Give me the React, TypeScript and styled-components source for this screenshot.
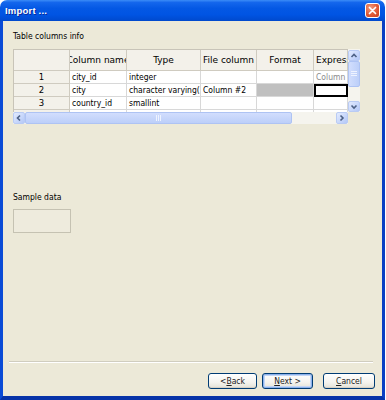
import React from 'react';
import styled, { createGlobalStyle } from 'styled-components';

const FONT = `"DejaVu Sans Condensed", "DejaVu Sans", "Liberation Sans", sans-serif`;

const Global = createGlobalStyle`
  html, body { margin: 0; padding: 0; background: #ffffff; }
  body { font-family: ${FONT}; font-size: 8.5px; color: #000; }
`;

const Window = styled.div`
  width: 385px;
  height: 400px;
  display: flex;
  flex-direction: column;
`;

const TitleBar = styled.div`
  height: 21px;
  flex: none;
  display: flex;
  align-items: center;
  justify-content: space-between;
  padding: 0 5px;
  border-radius: 7px 7px 0 0;
  background: linear-gradient(
    to bottom,
    #3b8cf7 0%,
    #1466ec 12%,
    #0458e4 40%,
    #0054e3 70%,
    #0049cd 100%
  );
`;

const TitleText = styled.span`
  color: #ffffff;
  font: bold 9.5px "Liberation Sans", Arial, sans-serif;
  letter-spacing: 0.2px;
  text-shadow: 1px 1px 0 #0b2a9a;
`;

const CloseBtn = styled.div`
  width: 13px;
  height: 13px;
  border: 1px solid #ffffff;
  border-radius: 3px;
  background: radial-gradient(circle at 35% 30%, #f39a7c 0%, #e05a36 55%, #c83e1e 100%);
  display: flex;
  align-items: center;
  justify-content: center;
`;

const Client = styled.div`
  flex: 1;
  display: flex;
  flex-direction: column;
  background: #ece9d8;
  border-style: solid;
  border-color: #0a4bd6 #0a3fc4 #0633a8 #0a4bd6;
  border-width: 0 3px 4px 3px;
  padding: 10px 7px 7px 10px;
`;

const Label = styled.div<{ $top?: number }>`
  height: 11px;
  line-height: 11px;
  margin-top: ${(p) => p.$top ?? 0}px;
  white-space: nowrap;
`;

const GridFrame = styled.div`
  margin-top: 7px;
  width: 347px;
  display: grid;
  grid-template-columns: 335px 12px;
  grid-template-rows: 63px 12px;
`;

const Viewport = styled.div`
  overflow: hidden;
  background: #ffffff;
  border-left: 1px solid #c8c4b8;
  border-top: 1px solid #c8c4b8;
  box-sizing: border-box;
`;

const Table = styled.div`
  display: grid;
  grid-template-columns: 56px 57px 74px 56px 57px 34px;
  grid-auto-rows: 13px;
  grid-template-rows: 21px;
`;

const Cell = styled.div<{ $head?: boolean; $align?: 'left' | 'center'; $bg?: string; $muted?: boolean; $current?: boolean }>`
  box-sizing: border-box;
  overflow: hidden;
  white-space: nowrap;
  display: flex;
  align-items: center;
  justify-content: ${(p) => (p.$align === 'center' ? 'center' : 'flex-start')};
  padding: ${(p) => (p.$align === 'center' ? '0' : '0 2px')};
  background: ${(p) => p.$bg ?? (p.$head ? '#f3f1ea' : '#ffffff')};
  color: ${(p) => (p.$muted ? '#8a8a8a' : '#000')};
  border-right: 1px solid ${(p) => (p.$head ? '#cfcbc0' : '#d8d8d8')};
  border-bottom: 1px solid ${(p) => (p.$head ? '#cfcbc0' : '#d8d8d8')};
  ${(p) => (p.$current ? 'outline: 2px solid #000; outline-offset: -2px;' : '')}
`;

const HeadText = styled.span`
  font-family: "DejaVu Sans", "Liberation Sans", sans-serif;
  font-size: 9px;
  flex: none;
`;

const Num = styled.span`
  font-family: "DejaVu Sans", sans-serif;
  font-size: 8.5px;
`;

const VScroll = styled.div`
  display: flex;
  flex-direction: column;
  background: #f5f4ee;
  padding-top: 1px;
`;

const HScroll = styled.div`
  display: flex;
  flex-direction: row;
  background: #f5f4ee;
`;

const Corner = styled.div`
  background: #ece9d8;
`;

const ScrollBtn = styled.div<{ $h?: number }>`
  box-sizing: border-box;
  width: 12px;
  height: ${(p) => p.$h ?? 12}px;
  flex: none;
  border: 1px solid #b9cbf4;
  border-radius: 2px;
  background: linear-gradient(135deg, #e3ebfe 0%, #c6d6fb 60%, #b4c8f6 100%);
  display: flex;
  align-items: center;
  justify-content: center;
`;

const Thumb = styled.div<{ $size: number; $vertical?: boolean }>`
  box-sizing: border-box;
  flex: none;
  ${(p) => (p.$vertical ? `height: ${p.$size}px; width: 12px;` : `width: ${p.$size}px; height: 12px;`)}
  border: 1px solid #aec3f3;
  border-radius: 2px;
  background: ${(p) =>
    p.$vertical
      ? 'linear-gradient(to right, #d2defd, #bccff9)'
      : 'linear-gradient(to bottom, #d2defd, #bccff9)'};
  display: flex;
  align-items: center;
  justify-content: center;
`;

const Track = styled.div`
  flex: 1;
`;

const SampleBox = styled.div`
  margin-top: 6px;
  width: 58px;
  height: 24px;
  box-sizing: border-box;
  border: 1px solid #c5c2b2;
  background: #eeebdd;
`;

const Spacer = styled.div`
  flex: 1;
`;

const Separator = styled.div`
  height: 0;
  margin: 0 2px 10px -4px;
  border-top: 1px solid #d0cdbf;
  border-bottom: 1px solid #ffffff;
`;

const ButtonRow = styled.div`
  display: flex;
  justify-content: flex-end;
  gap: 5px;
`;

const Button = styled.div<{ $w: number; $default?: boolean; $gapLeft?: number }>`
  box-sizing: border-box;
  width: ${(p) => p.$w}px;
  height: 16px;
  margin-left: ${(p) => p.$gapLeft ?? 0}px;
  border: 1px solid #003c74;
  border-radius: 3px;
  background: linear-gradient(to bottom, #ffffff 0%, #f4f3ee 60%, #e3e1d6 100%);
  ${(p) => (p.$default ? 'box-shadow: inset 0 0 0 1px #8cb2ec, inset 0 0 0 2px #c3d6f5;' : 'box-shadow: inset 0 -1px 0 #d6d0c5;')}
  display: flex;
  align-items: center;
  justify-content: center;
  white-space: nowrap;
  font-size: 8.5px;
  color: #222;
`;

const U = styled.span`
  text-decoration: underline;
`;

const Chevron = ({ dir }: { dir: 'up' | 'down' | 'left' | 'right' }) => {
  const pts = {
    up: '1.5,5 4,2.5 6.5,5',
    down: '1.5,2.5 4,5 6.5,2.5',
    left: '5,1.5 2.5,4 5,6.5',
    right: '2.5,1.5 5,4 2.5,6.5',
  }[dir];
  return (
    <svg width="8" height="8" viewBox="0 0 8 8">
      <polyline points={pts} fill="none" stroke="#4d6185" strokeWidth="1.6" />
    </svg>
  );
};

const Grip = ({ vertical }: { vertical?: boolean }) =>
  vertical ? (
    <svg width="6" height="6" viewBox="0 0 6 6">
      {[0.5, 2.5, 4.5].map((y) => (
        <line key={y} x1="0" y1={y} x2="6" y2={y} stroke="#eef3ff" strokeWidth="1" />
      ))}
    </svg>
  ) : (
    <svg width="6" height="6" viewBox="0 0 6 6">
      {[0.5, 2.5, 4.5].map((x) => (
        <line key={x} x1={x} y1="0" x2={x} y2="6" stroke="#eef3ff" strokeWidth="1" />
      ))}
    </svg>
  );

type Row = { n: string; name: string; type: string; file: string; fmtGrey?: boolean; expr: string; current?: boolean };

const rows: Row[] = [
  { n: '1', name: 'city_id', type: 'integer', file: '', expr: 'Column' },
  { n: '2', name: 'city', type: 'character varying(50)', file: 'Column #2', fmtGrey: true, expr: '', current: true },
  { n: '3', name: 'country_id', type: 'smallint', file: '', expr: '' },
  { n: '', name: '', type: '', file: '', expr: '' },
];

export default function App() {
  return (
    <>
      <Global />
      <Window>
        <TitleBar>
          <TitleText>Import ...</TitleText>
          <CloseBtn>
            <svg width="9" height="9" viewBox="0 0 9 9">
              <path d="M1.5 1.5 L7.5 7.5 M7.5 1.5 L1.5 7.5" stroke="#fff" strokeWidth="1.7" strokeLinecap="round" />
            </svg>
          </CloseBtn>
        </TitleBar>
        <Client>
          <Label>Table columns info</Label>
          <GridFrame>
            <Viewport>
              <Table>
                <Cell $head />
                <Cell $head $align="center"><HeadText>Column name</HeadText></Cell>
                <Cell $head $align="center"><HeadText>Type</HeadText></Cell>
                <Cell $head $align="center"><HeadText>File column</HeadText></Cell>
                <Cell $head $align="center"><HeadText>Format</HeadText></Cell>
                <Cell $head><HeadText>Expression</HeadText></Cell>
                {rows.map((r, i) => (
                  <React.Fragment key={i}>
                    <Cell $head $align="center">
                      <Num>{r.n}</Num>
                    </Cell>
                    <Cell>{r.name}</Cell>
                    <Cell>{r.type}</Cell>
                    <Cell>{r.file}</Cell>
                    <Cell $bg={r.fmtGrey ? '#c0c0c0' : undefined} />
                    <Cell $muted $current={r.current}>
                      {r.expr}
                    </Cell>
                  </React.Fragment>
                ))}
              </Table>
            </Viewport>
            <VScroll>
              <ScrollBtn $h={11}>
                <Chevron dir="up" />
              </ScrollBtn>
              <Thumb $vertical $size={26}>
                <Grip vertical />
              </Thumb>
              <Track />
              <ScrollBtn $h={11}>
                <Chevron dir="down" />
              </ScrollBtn>
            </VScroll>
            <HScroll>
              <ScrollBtn>
                <Chevron dir="left" />
              </ScrollBtn>
              <Thumb $size={267}>
                <Grip />
              </Thumb>
              <Track />
              <ScrollBtn>
                <Chevron dir="right" />
              </ScrollBtn>
            </HScroll>
            <Corner />
          </GridFrame>
          <Label $top={68}>Sample data</Label>
          <SampleBox />
          <Spacer />
          <Separator />
          <ButtonRow>
            <Button $w={49}>
              &lt; <U>B</U>ack
            </Button>
            <Button $w={51} $default>
              <U>N</U>ext &gt;
            </Button>
            <Button $w={52} $gapLeft={5}>
              <U>C</U>ancel
            </Button>
          </ButtonRow>
        </Client>
      </Window>
    </>
  );
}
